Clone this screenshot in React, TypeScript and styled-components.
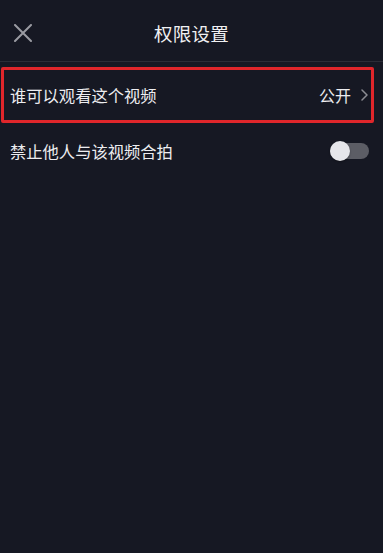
import React, { useState } from 'react';
import styled, { createGlobalStyle } from 'styled-components';

const GlobalStyle = createGlobalStyle`
  html, body {
    margin: 0;
    padding: 0;
    background: #161823;
  }
  body {
    font-family: "Noto Sans CJK SC", "Noto Sans", sans-serif;
  }
`;

const Page = styled.div`
  width: 383px;
  height: 553px;
  background: #161823;
  color: #e8e8ea;
  overflow: hidden;
`;

const Header = styled.header`
  height: 62px;
  display: grid;
  grid-template-columns: 48px 1fr 48px;
  align-items: center;
  border-bottom: 1px solid #2b2d37;
  padding-top: 4px;
  box-sizing: border-box;
`;

const CloseButton = styled.button`
  background: none;
  border: none;
  padding: 0 0 0 14px;
  display: flex;
  align-items: center;
  color: #9a9ba2;
  cursor: pointer;
`;

const Title = styled.h1`
  margin: 0;
  text-align: center;
  font-size: 18.5px;
  font-weight: 400;
  color: #f0f0f2;
  letter-spacing: 0.3px;
`;

const List = styled.div`
  display: flex;
  flex-direction: column;
  padding-top: 5px;
`;

const Row = styled.div<{ $highlight?: boolean }>`
  height: 56px;
  box-sizing: border-box;
  display: flex;
  align-items: center;
  justify-content: space-between;
  margin: ${p => (p.$highlight ? '0 9px 0 1px' : '0')};
  padding: ${p => (p.$highlight ? '0 3px 0 6px' : '0 14px 0 10px')};
  border: ${p => (p.$highlight ? '3px solid #e0262b' : 'none')};
  border-radius: 2px;
`;

const Label = styled.span`
  font-size: 16.3px;
  color: #ededf0;
`;

const Value = styled.span`
  display: flex;
  align-items: center;
  gap: 10px;
  font-size: 16px;
  color: #ededf0;
`;

const Track = styled.button<{ $on: boolean }>`
  position: relative;
  width: 39px;
  height: 16px;
  border: none;
  padding: 0;
  border-radius: 8px;
  background: ${p => (p.$on ? '#fe2c55' : '#5c5d65')};
  cursor: pointer;
`;

const Knob = styled.span<{ $on: boolean }>`
  position: absolute;
  top: -2px;
  left: ${p => (p.$on ? '19px' : '0')};
  width: 20px;
  height: 20px;
  border-radius: 50%;
  background: #e6e6ea;
  box-shadow: 0 1px 2px rgba(0, 0, 0, 0.3);
  transition: left 0.2s;
`;

export default function App() {
  const [duet, setDuet] = useState(false);

  return (
    <Page>
      <GlobalStyle />
      <Header>
        <CloseButton aria-label="关闭">
          <svg width="18" height="18" viewBox="0 0 18 18">
            <path d="M1 1 L17 17 M17 1 L1 17" stroke="currentColor" strokeWidth="2" strokeLinecap="round" />
          </svg>
        </CloseButton>
        <Title>权限设置</Title>
        <span />
      </Header>
      <List>
        <Row $highlight>
          <Label>谁可以观看这个视频</Label>
          <Value>
            公开
            <svg width="7" height="12" viewBox="0 0 7 12">
              <path d="M1 1 L6 6 L1 11" fill="none" stroke="#8c8d94" strokeWidth="1.5" strokeLinecap="round" strokeLinejoin="round" />
            </svg>
          </Value>
        </Row>
        <Row>
          <Label>禁止他人与该视频合拍</Label>
          <Track $on={duet} onClick={() => setDuet(!duet)} aria-label="合拍开关">
            <Knob $on={duet} />
          </Track>
        </Row>
      </List>
    </Page>
  );
}
